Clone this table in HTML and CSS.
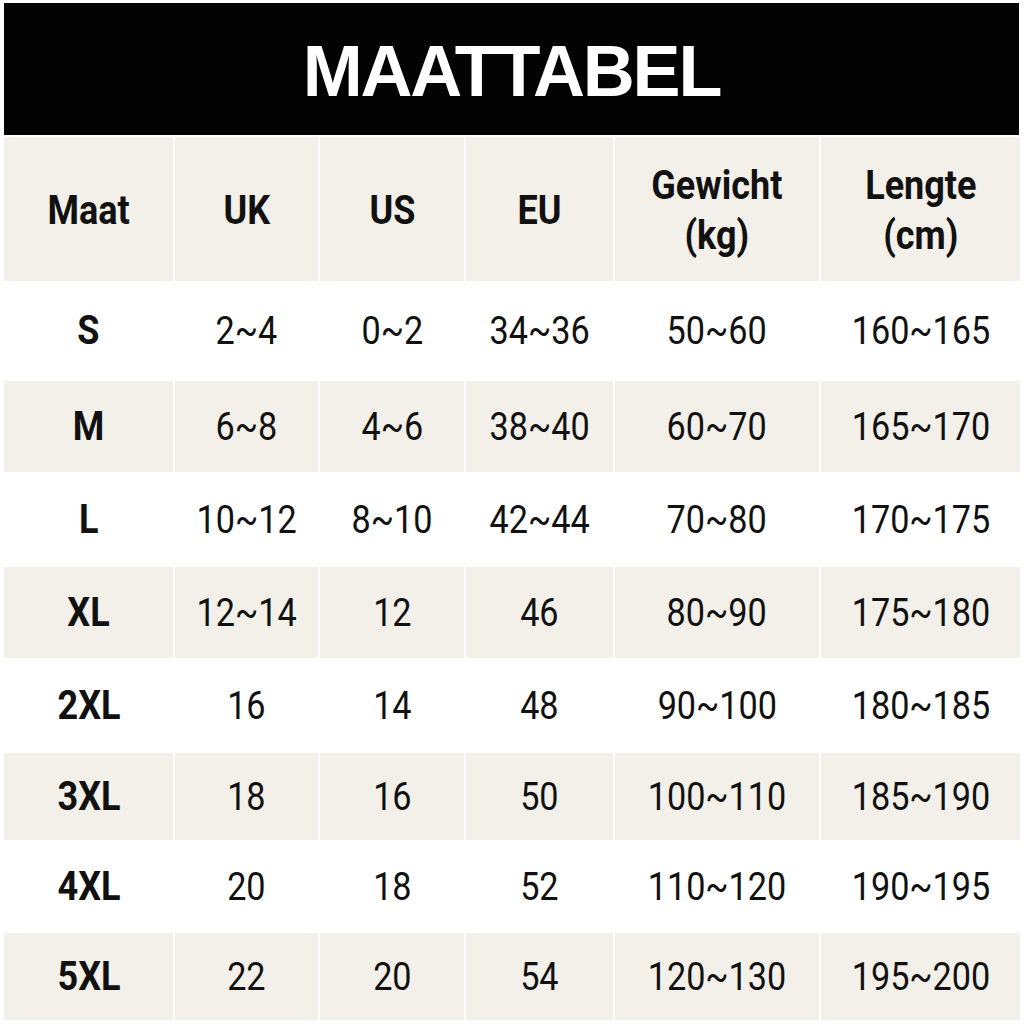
FILE: index.html
```html
<!DOCTYPE html>
<html lang="nl">
<head>
<meta charset="utf-8">
<title>Maattabel</title>
<link rel="stylesheet" href="styles.css">
</head>
<body>
<div class="title"><span>MAATTABEL</span></div>
<div class="table">
  <div class="row head">
    <div class="cell"><span>Maat</span></div>
    <div class="cell"><span>UK</span></div>
    <div class="cell"><span>US</span></div>
    <div class="cell"><span>EU</span></div>
    <div class="cell"><span>Gewicht<br>(kg)</span></div>
    <div class="cell"><span>Lengte<br>(cm)</span></div>
  </div>
  <div class="row white r-s">
    <div class="cell size"><span>S</span></div>
    <div class="cell"><span>2~4</span></div>
    <div class="cell"><span>0~2</span></div>
    <div class="cell"><span>34~36</span></div>
    <div class="cell"><span>50~60</span></div>
    <div class="cell"><span>160~165</span></div>
  </div>
  <div class="row beige r-m">
    <div class="cell size"><span>M</span></div>
    <div class="cell"><span>6~8</span></div>
    <div class="cell"><span>4~6</span></div>
    <div class="cell"><span>38~40</span></div>
    <div class="cell"><span>60~70</span></div>
    <div class="cell"><span>165~170</span></div>
  </div>
  <div class="row white r-l">
    <div class="cell size"><span>L</span></div>
    <div class="cell"><span>10~12</span></div>
    <div class="cell"><span>8~10</span></div>
    <div class="cell"><span>42~44</span></div>
    <div class="cell"><span>70~80</span></div>
    <div class="cell"><span>170~175</span></div>
  </div>
  <div class="row beige r-xl">
    <div class="cell size"><span>XL</span></div>
    <div class="cell"><span>12~14</span></div>
    <div class="cell"><span>12</span></div>
    <div class="cell"><span>46</span></div>
    <div class="cell"><span>80~90</span></div>
    <div class="cell"><span>175~180</span></div>
  </div>
  <div class="row white r-2xl">
    <div class="cell size"><span>2XL</span></div>
    <div class="cell"><span>16</span></div>
    <div class="cell"><span>14</span></div>
    <div class="cell"><span>48</span></div>
    <div class="cell"><span>90~100</span></div>
    <div class="cell"><span>180~185</span></div>
  </div>
  <div class="row beige r-3xl">
    <div class="cell size"><span>3XL</span></div>
    <div class="cell"><span>18</span></div>
    <div class="cell"><span>16</span></div>
    <div class="cell"><span>50</span></div>
    <div class="cell"><span>100~110</span></div>
    <div class="cell"><span>185~190</span></div>
  </div>
  <div class="row white r-4xl">
    <div class="cell size"><span>4XL</span></div>
    <div class="cell"><span>20</span></div>
    <div class="cell"><span>18</span></div>
    <div class="cell"><span>52</span></div>
    <div class="cell"><span>110~120</span></div>
    <div class="cell"><span>190~195</span></div>
  </div>
  <div class="row beige r-5xl">
    <div class="cell size"><span>5XL</span></div>
    <div class="cell"><span>22</span></div>
    <div class="cell"><span>20</span></div>
    <div class="cell"><span>54</span></div>
    <div class="cell"><span>120~130</span></div>
    <div class="cell"><span>195~200</span></div>
  </div>
</div>
</body>
</html>
```
FILE: styles.css
```css
html, body {
  background: #ffffff;
}
body {
  margin: 3px 4px 0 4px;
  font-family: Roboto, "Liberation Sans", sans-serif;
  color: #111111;
}
.title {
  height: 132px;
  width: 1015px;
  background: #030303;
  display: flex;
  align-items: center;
  justify-content: center;
}
.title span {
  font-family: "Liberation Sans", Arial, sans-serif;
  font-weight: 700;
  font-size: 72px;
  letter-spacing: -2.2px;
  color: #ffffff;
  padding-top: 3px;
}
.table {
  margin-top: 2px;
  display: flex;
  flex-direction: column;
  gap: 2px;
  width: 1016px;
}
.row {
  display: grid;
  grid-template-columns: 169px 143px 144px 147px 204px 199px;
  gap: 2px;
}
.row .cell {
  display: flex;
  align-items: center;
  justify-content: center;
  text-align: center;
}
.head .cell, .beige .cell {
  background: #f3f0e9;
}
.white .cell {
  background: #ffffff;
}
.cell span {
  display: inline-block;
  font-size: 38px;
  font-weight: 400;
  transform: scaleX(0.9);
  white-space: nowrap;
}
.head .cell span, .size span {
  font-size: 40px;
  font-weight: 700;
  line-height: 50px;
}
.head .cell span {
  padding-top: 3px;
}
.head { height: 144px; }
.r-s { height: 96px; }
.r-m { height: 91px; }
.r-l { height: 91px; }
.r-xl { height: 91px; }
.r-2xl { height: 91px; }
.r-3xl { height: 87px; }
.r-4xl { height: 89px; }
.r-5xl { height: 87px; }
```
